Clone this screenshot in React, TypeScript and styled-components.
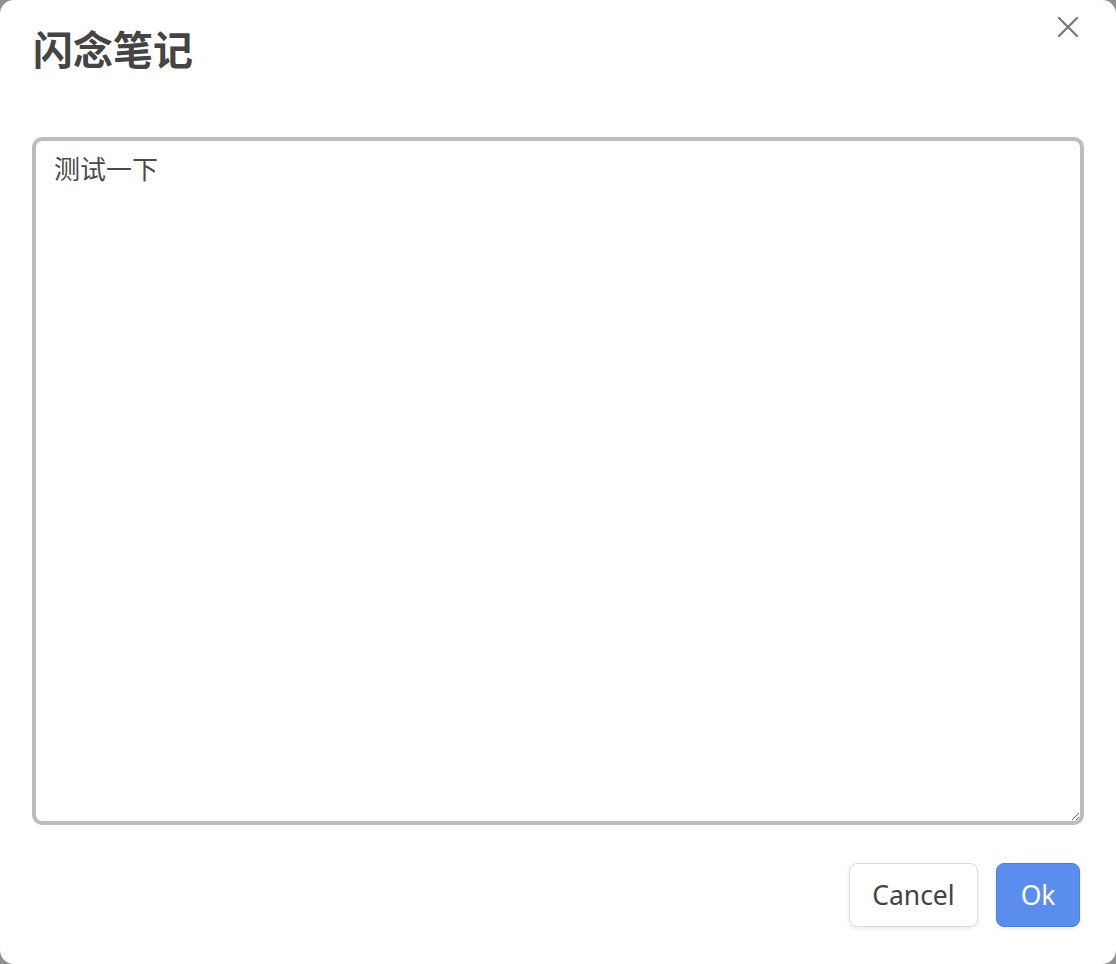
import React from "react";
import styled, { createGlobalStyle } from "styled-components";

const Global = createGlobalStyle`
  html, body { margin: 0; padding: 0; background: #8f8f8f; }
  body { font-family: "Noto Sans", "Noto Sans CJK SC", sans-serif; }
  * { box-sizing: border-box; }
`;

const Dialog = styled.div`
  width: 1116px;
  height: 964px;
  background: #ffffff;
  border-radius: 14px;
  display: flex;
  flex-direction: column;
  padding: 0 32px 37px 32px;
`;

const Header = styled.div`
  display: flex;
  justify-content: space-between;
  align-items: flex-start;
  padding-top: 24px;
  height: 137px;
`;

const Title = styled.h1`
  margin: 0 0 0 1px;
  font-family: "Noto Sans CJK SC", "Noto Sans", sans-serif;
  font-weight: 700;
  font-size: 40px;
  line-height: 48px;
  color: #444444;
`;

const CloseButton = styled.button`
  border: none;
  background: transparent;
  padding: 0;
  margin: -10px 3px 0 0;
  width: 26px;
  height: 26px;
  display: flex;
  align-items: center;
  justify-content: center;
  cursor: pointer;
`;

const NoteArea = styled.textarea`
  display: block;
  width: 100%;
  height: 688px;
  border: 4px solid #bdbdbd;
  border-radius: 10px;
  padding: 9px 18px;
  font-family: "Noto Sans CJK SC", "Noto Sans", sans-serif;
  font-size: 26px;
  line-height: 36px;
  color: #4a4a4a;
  outline: none;
  resize: both;
  background: #fff;
`;

const Footer = styled.div`
  display: flex;
  justify-content: flex-end;
  gap: 18px;
  margin-top: 38px;
  padding-right: 4px;
`;

const Button = styled.button<{ $primary?: boolean }>`
  height: 64px;
  padding: 0 ${(p) => (p.$primary ? "23.5px" : "22.5px")};
  border-radius: 8px;
  font-family: "Noto Sans", sans-serif;
  font-size: 26.5px;
  cursor: pointer;
  border: 1.5px solid ${(p) => (p.$primary ? "#4f7fdc" : "#dcdcdc")};
  background: ${(p) => (p.$primary ? "#5b8def" : "#ffffff")};
  color: ${(p) => (p.$primary ? "#ffffff" : "#444444")};
  box-shadow: 0 2px 4px rgba(0, 0, 0, 0.08);
`;

export default function App() {
  return (
    <>
      <Global />
      <Dialog>
        <Header>
          <Title>闪念笔记</Title>
          <CloseButton aria-label="close">
            <svg width="22" height="22" viewBox="0 0 22 22">
              <path d="M2 2 L20 20 M20 2 L2 20" stroke="#777" strokeWidth="2.2" strokeLinecap="round" />
            </svg>
          </CloseButton>
        </Header>
        <NoteArea defaultValue="测试一下" />
        <Footer>
          <Button>Cancel</Button>
          <Button $primary>Ok</Button>
        </Footer>
      </Dialog>
    </>
  );
}
